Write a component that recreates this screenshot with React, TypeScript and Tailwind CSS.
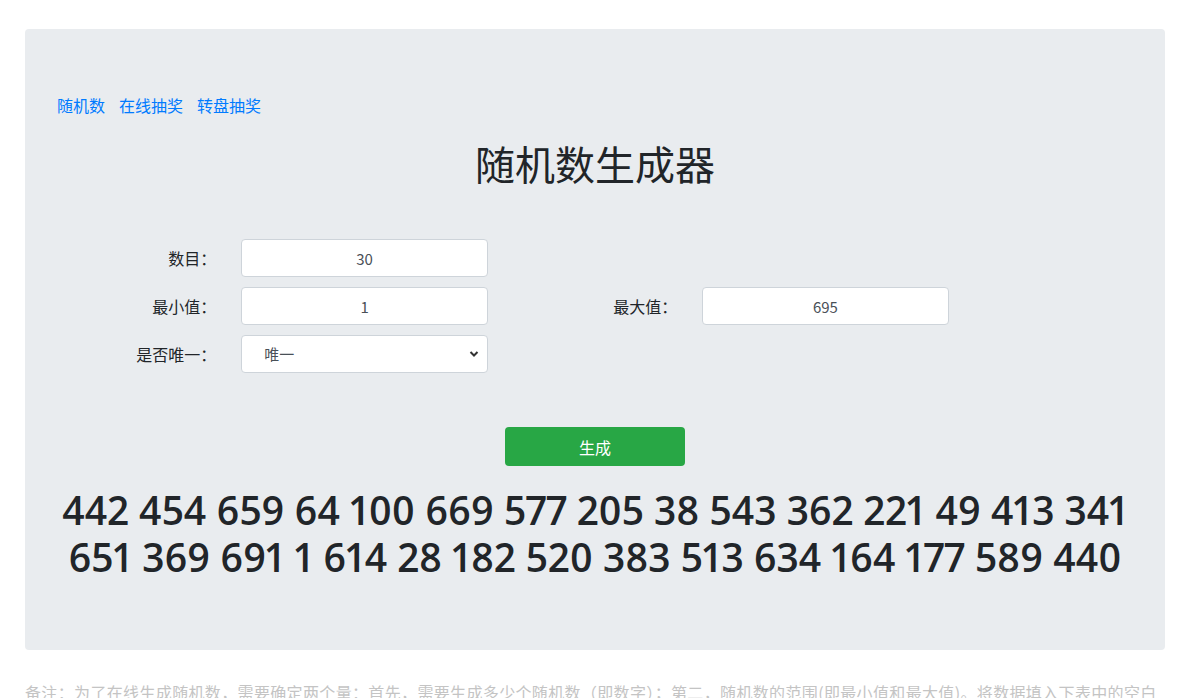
import { useState } from "react";

const cjk = "font-['Segoe_UI','Noto_Sans_CJK_SC',sans-serif]";

const numbers = [
  442, 454, 659, 64, 100, 669, 577, 205, 38, 543, 362, 221, 49, 413, 341,
  651, 369, 691, 1, 614, 28, 182, 520, 383, 513, 634, 164, 177, 589, 440,
];

function Field({ label, value }: { label: string; value: string }) {
  return (
    <>
      <label className="col-span-2 flex items-center justify-end pl-[15px] pr-[10px] text-base text-[#212529]">
        {label}
      </label>
      <div className="col-span-3 px-[15px]">
        <input
          defaultValue={value}
          className="h-[38px] w-full rounded border border-[#ced4da] bg-white text-center text-[15px] text-[#495057] outline-none"
        />
      </div>
    </>
  );
}

export default function App() {
  const [unique, setUnique] = useState("唯一");

  return (
    <div className={`min-h-screen bg-white ${cjk}`}>
      <div className="ml-[25px] mt-[29px] w-[1140px] rounded bg-[#e9ecef] px-8 pb-[70px] pt-16">
        {/* Nav links */}
        <div className="flex gap-[14px] text-base leading-6 text-[#007bff]">
          <a href="#">随机数</a>
          <a href="#">在线抽奖</a>
          <a href="#">转盘抽奖</a>
        </div>

        <h1 className="mt-[22px] text-center text-[40px] font-normal leading-[48px] text-[#212529]">
          随机数生成器
        </h1>

        {/* Form */}
        <div className="-mx-[15px] mt-[52px] grid grid-cols-12 gap-y-[10px]">
          <Field label="数目：" value="30" />
          <div className="col-span-7" />
          <Field label="最小值：" value="1" />
          <Field label="最大值：" value="695" />
          <div className="col-span-2" />
          <label className="col-span-2 flex items-center justify-end pl-[15px] pr-[10px] text-base text-[#212529]">
            是否唯一：
          </label>
          <div className="relative col-span-3 px-[15px]">
            <select
              value={unique}
              onChange={(e) => setUnique(e.target.value)}
              className="h-[38px] w-full appearance-none rounded border border-[#ced4da] bg-white pl-[22px] text-[15px] text-[#495057] outline-none"
            >
              <option>唯一</option>
              <option>不唯一</option>
            </select>
            <svg
              className="pointer-events-none absolute right-[24px] top-[15px] h-[8px] w-[10px] text-[#333]"
              viewBox="0 0 10 8"
              fill="none"
              stroke="currentColor"
              strokeWidth={2}
            >
              <path d="M1.5 2l3.5 3.5L8.5 2" />
            </svg>
          </div>
        </div>

        <div className="mt-[54px] flex justify-center">
          <button className="h-[39px] w-[180px] rounded bg-[#28a745] text-base text-white">
            生成
          </button>
        </div>

        {/* Result */}
        <div className="mt-[20px] text-center font-['Open_Sans',sans-serif] text-[39px] font-semibold leading-[47px] text-[#212529] proportional-nums">
          {numbers.join(" ")}
        </div>
      </div>

      <p className="ml-[25px] mt-[30px] whitespace-nowrap text-base leading-6 tracking-[0.35px] text-[#c4c4c4]">
        备注：为了在线生成随机数，需要确定两个量：首先，需要生成多少个随机数（即数字）；第二，随机数的范围(即最小值和最大值)。将数据填入下表中的空白
      </p>
    </div>
  );
}
